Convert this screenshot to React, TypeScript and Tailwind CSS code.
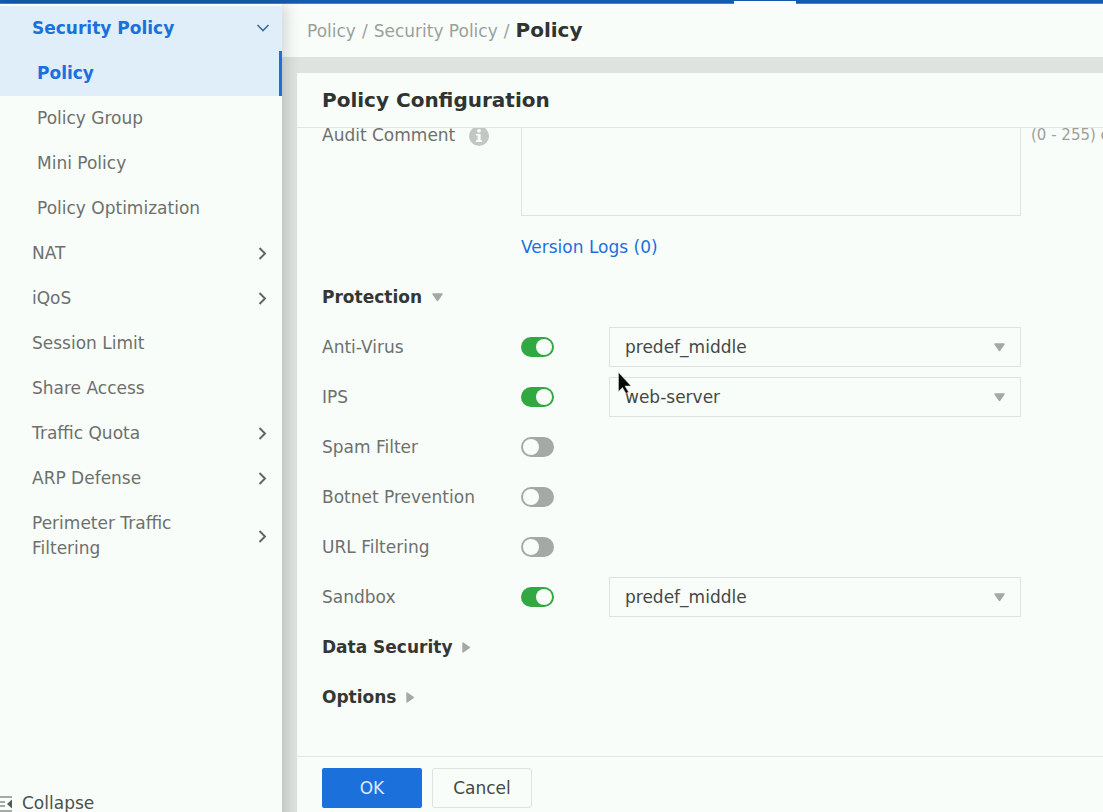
import { useState } from "react";

type NavItem = { label: string; expandable?: boolean; child?: boolean };

const navItems: NavItem[] = [
  { label: "Policy Group", child: true },
  { label: "Mini Policy", child: true },
  { label: "Policy Optimization", child: true },
  { label: "NAT", expandable: true },
  { label: "iQoS", expandable: true },
  { label: "Session Limit" },
  { label: "Share Access" },
  { label: "Traffic Quota", expandable: true },
  { label: "ARP Defense", expandable: true },
  { label: "Perimeter Traffic Filtering", expandable: true },
];

type Protection = { id: string; label: string; on: boolean; profile?: string };

const protections: Protection[] = [
  { id: "av", label: "Anti-Virus", on: true, profile: "predef_middle" },
  { id: "ips", label: "IPS", on: true, profile: "web-server" },
  { id: "spam", label: "Spam Filter", on: false },
  { id: "botnet", label: "Botnet Prevention", on: false },
  { id: "url", label: "URL Filtering", on: false },
  { id: "sandbox", label: "Sandbox", on: true, profile: "predef_middle" },
];

function ChevronRight() {
  return (
    <svg width="9" height="15" viewBox="0 0 9 15" fill="none" className="shrink-0" aria-hidden="true">
      <path d="M1.500 2 7 7.500 1.500 13" stroke="#606360" strokeWidth="1.900" />
    </svg>
  );
}

function Caret({ open }: { open: boolean }) {
  return open ? (
    <svg width="11" height="9" viewBox="0 0 11 9" aria-hidden="true">
      <path d="M1 1h9L5.500 7.500z" fill="#a6a8a6" stroke="#a6a8a6" strokeWidth="1.400" strokeLinejoin="round" />
    </svg>
  ) : (
    <svg width="9" height="11" viewBox="0 0 9 11" aria-hidden="true">
      <path d="M1 1v9L7.500 5.500z" fill="#a6a8a6" stroke="#a6a8a6" strokeWidth="1.400" strokeLinejoin="round" />
    </svg>
  );
}

function Section({ title, open }: { title: string; open: boolean }) {
  return (
    <h3 className="flex h-[50px] shrink-0 items-center">
      <button type="button" aria-expanded={open} className="flex items-center gap-[10px] font-bold text-[#343734]">
        {title}
        <Caret open={open} />
      </button>
    </h3>
  );
}

function ProtectionRow({ item }: { item: Protection }) {
  const [on, setOn] = useState(item.on);
  return (
    <div className="flex h-[50px] shrink-0 items-center">
      <label htmlFor={item.id} className="w-[199px] shrink-0">
        {item.label}
      </label>
      <input
        id={item.id}
        type="checkbox"
        role="switch"
        checked={on}
        onChange={(e) => setOn(e.target.checked)}
        className="flex h-5 w-[33px] shrink-0 appearance-none items-center rounded-full bg-[#a6a8a6] px-[2px] before:size-4 before:rounded-full before:bg-[#f8fdf9] checked:justify-end checked:bg-[#31a841]"
      />
      {item.profile && (
        <div className="relative ml-[55px] w-[412px] shrink-0">
          <select
            aria-label={item.label + " profile"}
            defaultValue={item.profile}
            className="h-10 w-full appearance-none border border-[#dfe3df] bg-transparent px-[15px] text-[#454845]"
          >
            <option>{item.profile}</option>
          </select>
          <span className="pointer-events-none absolute inset-y-0 right-4 flex items-center">
            <Caret open />
          </span>
          {item.id === "ips" && (
            <svg className="pointer-events-none absolute -top-[5px] left-[9px]" width="15" height="22" viewBox="0 0 15 22" aria-hidden="true">
              <path d="M.5.5v19l4-4 3.500 6 2.500-1.500-3.500-6H13z" fill="#080808" stroke="#d8dbd8" strokeWidth=".5" />
            </svg>
          )}
        </div>
      )}
    </div>
  );
}

export default function App() {
  return (
    <div className="flex h-screen flex-col overflow-hidden bg-[#dfe3df] font-['DejaVu_Sans',sans-serif] text-[17px] leading-[25px] text-[#6d706d]">
      <div className="flex h-1 shrink-0 items-end border-b border-[#4b82c4] bg-[#125bb0] pl-[734px]">
        <div className="-mb-px h-[3px] w-[62px] bg-[#f8fdf9]" />
      </div>
      <div className="flex min-h-0 flex-1">
        <nav className="z-10 -mb-5 flex w-[282px] shrink-0 flex-col bg-[#f8fdf9] pt-0.5 pb-5 shadow-[4px_0_14px_rgba(0,0,0,0.16)]">
          <div className="bg-[#dfeef8] font-bold text-[#1c70dc]">
            <a href="#security-policy" className="flex items-center justify-between py-[10px] pr-3 pl-8">
              Security Policy
              <svg width="14" height="9" viewBox="0 0 14 9" fill="none" aria-hidden="true">
                <path d="M1.500 1 7 6.500 12.500 1" stroke="#3f6f93" strokeWidth="1.600" />
              </svg>
            </a>
            <a href="#policy" aria-current="page" className="block border-r-3 border-[#1c70dc] py-[10px] pl-[37px]">
              Policy
            </a>
          </div>
          {navItems.map((item) => (
            <a
              key={item.label}
              href={"#" + item.label.toLowerCase().replaceAll(" ", "-")}
              className={
                item.child
                  ? "block py-[10px] pl-[37px]"
                  : "flex items-center justify-between py-[10px] pr-[15px] pl-8"
              }
            >
              <span className={item.child ? "" : "max-w-[180px]"}>{item.label}</span>
              {item.expandable && <ChevronRight />}
            </a>
          ))}
          <button type="button" className="mt-auto -mb-1 -ml-1 flex items-center gap-[10px] text-[#4d504d]">
            <svg width="16" height="16" viewBox="0 0 16 16" fill="none" aria-hidden="true">
              <path d="M0 1h16M0 6h9M0 10h9M0 15h16" stroke="#555855" strokeWidth="1.200" />
              <path d="M16 3.500v9L11 8z" fill="#555855" />
            </svg>
            Collapse
          </button>
        </nav>
        <main className="flex min-w-0 flex-1 flex-col">
          <header className="flex h-[53px] shrink-0 items-center bg-[#f8fdf9] pl-[25px]">
            <nav aria-label="Breadcrumb" className="flex items-baseline gap-[6px] text-[#9c9f9c]">
              <a href="#root">Policy</a>
              <span>/</span>
              <a href="#security-policy">Security Policy</a>
              <span>/</span>
              <h1 className="text-[20px] font-bold text-[#303330]">Policy</h1>
            </nav>
          </header>
          <section className="mt-4 ml-[15px] flex min-h-0 flex-1 flex-col bg-[#f8fdf9]">
            <h2 className="flex h-[55px] shrink-0 items-center border-b border-[#e3e7e3] pt-px pl-[25px] text-[20px] font-bold text-[#303330]">
              Policy Configuration
            </h2>
            <form className="flex min-h-0 flex-1 flex-col" onSubmit={(e) => e.preventDefault()}>
              <div className="flex min-h-0 flex-1 flex-col justify-end overflow-hidden pb-[34px] pl-[25px]">
                <div className="flex shrink-0 items-start pb-[6px]">
                  <label htmlFor="audit" className="flex w-[199px] shrink-0 items-center gap-[14px] pt-[7px]">
                    Audit Comment
                    <svg width="20" height="20" viewBox="0 0 20 20" aria-hidden="true">
                      <circle cx="10" cy="10" r="10" fill="#c3c6c3" />
                      <circle cx="10" cy="4.800" r="1.900" fill="#f8fdf9" />
                      <path d="M7 8h4.600v6.300h1.600V16H6.800v-1.700h1.800V9.600H7z" fill="#f8fdf9" />
                    </svg>
                  </label>
                  <textarea id="audit" className="block h-[100px] w-[500px] shrink-0 resize-none border border-[#dfe3df] p-2" />
                  <span className="pt-[7px] pl-[10px] text-[15px] whitespace-nowrap text-[#9c9f9c]">(0 - 255) chars</span>
                </div>
                <div className="flex h-[50px] shrink-0 items-center pl-[199px]">
                  <a href="#version-logs" className="text-[#1c70dc]">
                    Version Logs (0)
                  </a>
                </div>
                <Section title="Protection" open />
                {protections.map((item) => (
                  <ProtectionRow key={item.id} item={item} />
                ))}
                <Section title="Data Security" open={false} />
                <Section title="Options" open={false} />
              </div>
              <footer className="flex shrink-0 gap-[10px] border-t border-[#e3e7e3] pt-[11px] pb-1 pl-[25px]">
                <button type="submit" className="h-10 w-[100px] rounded-[2px] bg-[#1c70dc] text-[#d9eafa]">
                  OK
                </button>
                <button type="button" className="h-10 w-[100px] rounded-[3px] border border-[#dfe3df] text-[#454845]">
                  Cancel
                </button>
              </footer>
            </form>
          </section>
        </main>
      </div>
    </div>
  );
}
